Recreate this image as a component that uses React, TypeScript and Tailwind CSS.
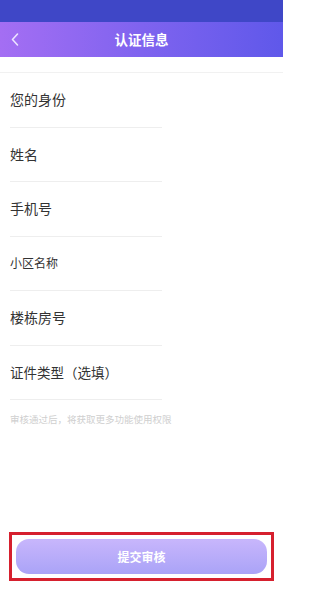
const FONT = '"Noto Sans CJK SC", "Liberation Sans", sans-serif';

const fields = [
  { label: '您的身份', size: 'text-[14px]' },
  { label: '姓名', size: 'text-[14px]' },
  { label: '手机号', size: 'text-[14px]' },
  { label: '小区名称', size: 'text-[12px]' },
  { label: '楼栋房号', size: 'text-[14px]' },
  { label: '证件类型（选填）', size: 'text-[13.5px]' },
];

export default function App() {
  return (
    <div className="w-[283px] h-[600px] bg-white flex flex-col overflow-hidden" style={{ fontFamily: FONT }}>
      {/* status bar */}
      <div className="h-[22px] bg-[#3f47c7] shrink-0" />

      {/* header */}
      <div className="h-[35px] shrink-0 flex items-center relative bg-gradient-to-r from-[#a46ef3] via-[#7f63ef] to-[#5f58ea]">
        <svg className="absolute left-[10px] top-[10px]" width="10" height="15" viewBox="0 0 10 15" fill="none">
          <path d="M7.5 2 L2.5 7.5 L7.5 13" stroke="#ece4ff" strokeWidth="1.6" strokeLinecap="round" strokeLinejoin="round" />
        </svg>
        <div className="flex-1 text-center text-white text-[13.5px] font-bold">认证信息</div>
      </div>

      {/* spacer with line */}
      <div className="h-[16px] shrink-0 border-b border-[#f1f1f1]" />

      {/* form */}
      <div className="flex flex-col">
        {fields.map((f) => (
          <div key={f.label} className="h-[54.5px] flex items-center pl-[10px]">
            <div className="w-[152px] h-full flex items-center border-b border-[#eeeeee] pl-[0px]">
              <span className={`${f.size} text-[#333333]`}>{f.label}</span>
            </div>
          </div>
        ))}
      </div>

      <div className="pl-[10px] pt-[12px] text-[9.5px] text-[#cfcfcf]">审核通过后，将获取更多功能使用权限</div>

      <div className="flex-1" />

      {/* submit */}
      <div className="px-[9px] pb-[19px]">
        <div className="border-[3px] border-[#d6202e] p-[4px] h-[49px] flex">
          <button className="flex-1 rounded-[13px] bg-gradient-to-b from-[#c8b6fc] to-[#aaa3f7] text-white text-[12px] font-bold">
            提交审核
          </button>
        </div>
      </div>
    </div>
  );
}
